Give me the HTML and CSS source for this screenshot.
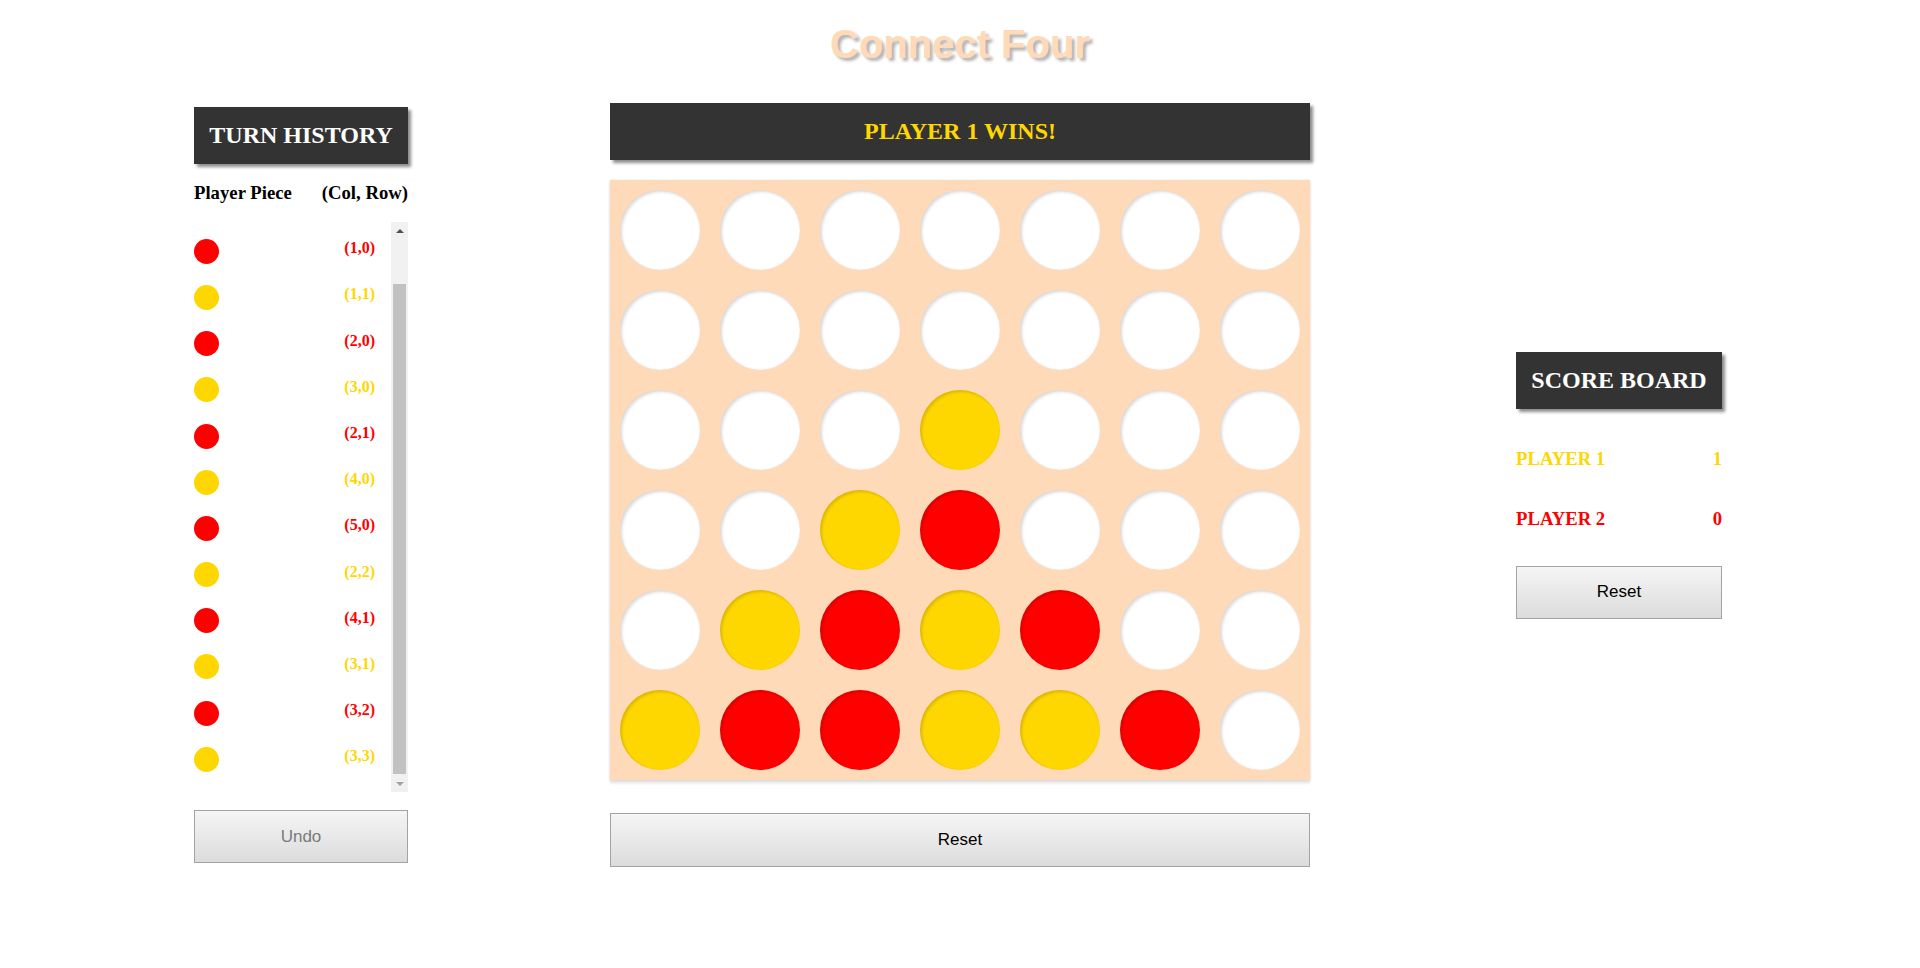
FILE: index.html
```html
<!DOCTYPE html>
<html lang="en">
<head>
<meta charset="utf-8">
<title>Connect Four</title>
<link rel="stylesheet" href="styles.css">
</head>
<body>
<h1 class="title">Connect Four</h1>
<main class="layout">
  <section class="history">
    <h2 class="banner">TURN HISTORY</h2>
    <div class="history-head"><span>Player Piece</span><span>(Col, Row)</span></div>
    <div class="history-box">
      <div class="history-view">
        <ul class="history-list">
          <li class="move"><span class="dot yellow"></span><span class="coord yellow-text">(0,0)</span></li>
          <li class="move"><span class="dot red"></span><span class="coord red-text">(1,0)</span></li>
          <li class="move"><span class="dot yellow"></span><span class="coord yellow-text">(1,1)</span></li>
          <li class="move"><span class="dot red"></span><span class="coord red-text">(2,0)</span></li>
          <li class="move"><span class="dot yellow"></span><span class="coord yellow-text">(3,0)</span></li>
          <li class="move"><span class="dot red"></span><span class="coord red-text">(2,1)</span></li>
          <li class="move"><span class="dot yellow"></span><span class="coord yellow-text">(4,0)</span></li>
          <li class="move"><span class="dot red"></span><span class="coord red-text">(5,0)</span></li>
          <li class="move"><span class="dot yellow"></span><span class="coord yellow-text">(2,2)</span></li>
          <li class="move"><span class="dot red"></span><span class="coord red-text">(4,1)</span></li>
          <li class="move"><span class="dot yellow"></span><span class="coord yellow-text">(3,1)</span></li>
          <li class="move"><span class="dot red"></span><span class="coord red-text">(3,2)</span></li>
          <li class="move"><span class="dot yellow"></span><span class="coord yellow-text">(3,3)</span></li>
        </ul>
      </div>
      <div class="scrollbar" aria-hidden="true">
        <span class="sb-btn"><span class="arrow-up"></span></span>
        <span class="sb-track"><span class="sb-thumb"></span></span>
        <span class="sb-btn"><span class="arrow-down"></span></span>
      </div>
    </div>
    <button class="btn btn-undo" disabled>Undo</button>
  </section>

  <section class="game">
    <h2 class="banner status">PLAYER 1 WINS!</h2>
    <div class="board">
      <span class="cell"></span><span class="cell"></span><span class="cell"></span><span class="cell"></span><span class="cell"></span><span class="cell"></span><span class="cell"></span>
      <span class="cell"></span><span class="cell"></span><span class="cell"></span><span class="cell"></span><span class="cell"></span><span class="cell"></span><span class="cell"></span>
      <span class="cell"></span><span class="cell"></span><span class="cell"></span><span class="cell yellow"></span><span class="cell"></span><span class="cell"></span><span class="cell"></span>
      <span class="cell"></span><span class="cell"></span><span class="cell yellow"></span><span class="cell red"></span><span class="cell"></span><span class="cell"></span><span class="cell"></span>
      <span class="cell"></span><span class="cell yellow"></span><span class="cell red"></span><span class="cell yellow"></span><span class="cell red"></span><span class="cell"></span><span class="cell"></span>
      <span class="cell yellow"></span><span class="cell red"></span><span class="cell red"></span><span class="cell yellow"></span><span class="cell yellow"></span><span class="cell red"></span><span class="cell"></span>
    </div>
    <button class="btn btn-reset-main">Reset</button>
  </section>

  <section class="scores">
    <h2 class="banner">SCORE BOARD</h2>
    <div class="score-row yellow-text"><span>PLAYER 1</span><span>1</span></div>
    <div class="score-row red-text"><span>PLAYER 2</span><span>0</span></div>
    <button class="btn btn-reset-side">Reset</button>
  </section>
</main>
</body>
</html>
```

FILE: styles.css
```css
html, body {
  margin: 0;
  padding: 0;
  background: #ffffff;
}

body {
  font-family: "Liberation Serif", "Times New Roman", serif;
  color: #000;
}

.title {
  margin: 21px 0 36px;
  height: 46px;
  line-height: 46px;
  text-align: center;
  font-family: "Liberation Sans", Arial, sans-serif;
  font-size: 40px;
  font-weight: bold;
  color: #ffdab9;
  text-shadow: 3px 3px 3px rgba(0, 0, 0, 0.3);
}

.layout {
  display: flex;
  align-items: center;
  padding-left: 194px;
}

.banner {
  margin: 0;
  height: 57px;
  box-sizing: border-box;
  padding: 0 16px;
  display: flex;
  align-items: center;
  justify-content: center;
  background: #333333;
  color: #ffffff;
  font-family: "Liberation Serif", "Times New Roman", serif;
  font-size: 24px;
  font-weight: bold;
  box-shadow: 3px 3px 3px rgba(0, 0, 0, 0.45);
  white-space: nowrap;
}

/* ---------- left: history ---------- */
.history {
  width: 214px;
  display: flex;
  flex-direction: column;
}

.history-head {
  display: flex;
  justify-content: space-between;
  margin: 18.7px 0;
  font-size: 18.72px;
  font-weight: bold;
  line-height: 21.5px;
  white-space: nowrap;
}

.history-box {
  height: 570px;
  display: flex;
}

.history-view {
  flex: 1;
  overflow: hidden;
  display: flex;
  flex-direction: column-reverse;
}

.history-list {
  list-style: none;
  margin: 0;
  padding: 10px 16px 10px 0;
  flex: none;
}

.move {
  height: 46.2px;
  display: flex;
  align-items: center;
  justify-content: space-between;
}

.dot {
  width: 25px;
  height: 25px;
  border-radius: 50%;
  flex: none;
}

.dot.red { background: #ff0000; }
.dot.yellow { background: #ffd700; }

.coord {
  font-size: 16px;
  font-weight: bold;
  margin-bottom: 6px;
}

.red-text { color: #ff0000; }
.yellow-text { color: #ffd700; }

/* fake classic scrollbar */
.scrollbar {
  width: 17px;
  flex: none;
  display: flex;
  flex-direction: column;
  background: #f1f1f1;
}

.sb-btn {
  height: 17px;
  flex: none;
  display: flex;
  align-items: center;
  justify-content: center;
}

.arrow-up {
  width: 0;
  height: 0;
  border-left: 4px solid transparent;
  border-right: 4px solid transparent;
  border-bottom: 4px solid #505050;
}

.arrow-down {
  width: 0;
  height: 0;
  border-left: 4px solid transparent;
  border-right: 4px solid transparent;
  border-top: 4px solid #a3a3a3;
}

.sb-track {
  flex: 1;
  display: flex;
  flex-direction: column;
  justify-content: flex-end;
  padding: 0 2px 1px;
}

.sb-thumb {
  height: 490px;
  background: #c1c1c1;
}

/* ---------- buttons ---------- */
.btn {
  display: block;
  box-sizing: border-box;
  height: 54px;
  border: 1px solid #a3a3a3;
  border-radius: 0;
  background: linear-gradient(to bottom, #f5f5f5, #dcdcdc);
  font-family: "Liberation Sans", Arial, sans-serif;
  font-size: 17px;
  color: #000;
  padding: 0;
}

.btn-undo {
  width: 214px;
  height: 53px;
  margin-top: 18px;
  color: #7a7a7a;
}

/* ---------- middle: game ---------- */
.game {
  width: 700px;
  margin-left: 202px;
  display: flex;
  flex-direction: column;
}

.status {
  color: #ffd700;
}

.board {
  margin-top: 20px;
  width: 700px;
  height: 600px;
  display: grid;
  grid-template-columns: repeat(7, 100px);
  grid-template-rows: repeat(6, 100px);
  background: #ffdab9;
  box-shadow: 0 3px 3px rgba(0, 0, 0, 0.12), 0 0 2px rgba(0, 0, 0, 0.1);
}

.cell {
  width: 80px;
  height: 80px;
  margin: 10px;
  border-radius: 50%;
  background: #ffffff;
  box-shadow: inset 2px 2px 3px rgba(0, 0, 0, 0.13), inset 0 0 2px rgba(0, 0, 0, 0.08);
}

.cell.red { background: #ff0000; }
.cell.yellow { background: #ffd700; }

.btn-reset-main {
  width: 700px;
  margin-top: 33px;
}

/* ---------- right: scores ---------- */
.scores {
  width: 206px;
  margin-left: 206px;
  display: flex;
  flex-direction: column;
}

.score-row {
  height: 60px;
  display: flex;
  align-items: center;
  justify-content: space-between;
  font-size: 18.72px;
  font-weight: bold;
}

.banner + .score-row {
  margin-top: 20px;
}

.btn-reset-side {
  width: 206px;
  height: 53px;
  margin-top: 17px;
}
```
